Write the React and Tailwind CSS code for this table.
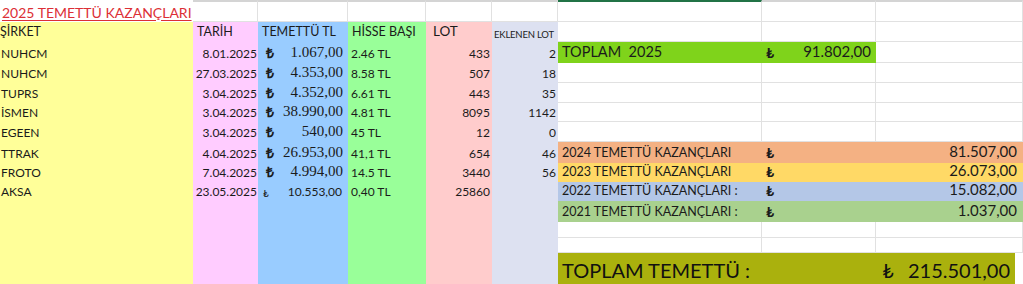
const sans = "font-['Lato',sans-serif]";
const serif = "font-['Liberation_Serif',serif]";

const rows = [
  ["NUHCM", "8.01.2025", "1.067,00", "2.46 TL", "433", "2"],
  ["NUHCM", "27.03.2025", "4.353,00", "8.58 TL", "507", "18"],
  ["TUPRS", "3.04.2025", "4.352,00", "6.61 TL", "443", "35"],
  ["İSMEN", "3.04.2025", "38.990,00", "4.81 TL", "8095", "1142"],
  ["EGEEN", "3.04.2025", "540,00", "45 TL", "12", "0"],
  ["TTRAK", "4.04.2025", "26.953,00", "41,1 TL", "654", "46"],
  ["FROTO", "7.04.2025", "4.994,00", "14.5 TL", "3440", "56"],
  ["AKSA", "23.05.2025", "10.553,00", "0,40 TL", "25860", ""],
];

// sag taraftaki renkli satirlar (satir indeksi -> bar)
const bars = {
  7: { label: "2024 TEMETTÜ KAZANÇLARI", value: "81.507,00", bg: "bg-[#f4b183]" },
  8: { label: "2023 TEMETTÜ KAZANÇLARI", value: "26.073,00", bg: "bg-[#ffd966]" },
  9: { label: "2022 TEMETTÜ KAZANÇLARI :", value: "15.082,00", bg: "bg-[#b4c7e7]" },
  10: { label: "2021 TEMETTÜ KAZANÇLARI :", value: "1.037,00", bg: "bg-[#a9d18e]" },
};

const grid = "border-r border-b border-[#e1e1e1] bg-white";

function Empty({ top, green }) {
  return (
    <div
      className={`${grid} ${top ? "border-t-2" : ""} ${
        top ? (green ? "border-t-[#217346]" : "border-t-[#d4d4d4]") : ""
      }`}
    />
  );
}

function LeftRow({ r }) {
  const cell = "flex items-end pb-[2px] leading-tight text-[12px] text-[#1b1b1b] whitespace-nowrap";
  return (
    <>
      <div className={`${cell} bg-[#ffff99] pl-[1px]`}>{r[0]}</div>
      <div className={`${cell} bg-[#ffccff] justify-end pr-[1px]`}>{r[1]}</div>
      {r[0] === "AKSA" ? (
        <div className={`${cell} bg-[#99ccff] pl-[5px] pr-[6px] justify-between`}>
          <span className="text-[10px]">₺</span>
          <span>{r[2]}</span>
        </div>
      ) : (
        <div className={`flex items-end pb-[1px] leading-tight bg-[#99ccff] pl-[8px] pr-[5px] justify-between text-[#1b1b1b] ${serif}`}>
          <span className="text-[14px] font-bold">₺</span>
          <span className="text-[15px]">{r[2]}</span>
        </div>
      )}
      <div className={`${cell} bg-[#99ff99] pl-[3px]`}>{r[3]}</div>
      <div className={`${cell} bg-[#ffcccc] justify-end pr-[2px]`}>{r[4]}</div>
      <div className={`${cell} bg-[#dde1f1] justify-end pr-[2px]`}>{r[5]}</div>
    </>
  );
}

function EmptyLeft() {
  return (
    <>
      <div className="bg-[#ffff99]" />
      <div className="bg-[#ffccff]" />
      <div className="bg-[#99ccff]" />
      <div className="bg-[#99ff99]" />
      <div className="bg-[#ffcccc]" />
      <div className="bg-[#dde1f1]" />
    </>
  );
}

function Bar({ label, value, bg }) {
  return (
    <div className={`col-span-3 flex items-end pb-[2px] leading-tight text-[12.5px] text-[#1b1b1b] whitespace-nowrap ${bg}`}>
      <span className="w-[208px] pl-[4px]">{label}</span>
      <span className="text-[14px] font-bold">₺</span>
      <span className="flex-1 text-right pr-[6px] text-[15px]">{value}</span>
    </div>
  );
}

export default function App() {
  const right = [];
  for (let i = 0; i < 14; i++) {
    if (i === 0) {
      right.push(
        <div key={i} className="contents">
          <Empty top green />
          <Empty top />
          <Empty top />
        </div>
      );
    } else if (i === 2) {
      right.push(
        <div key={i} className="contents">
          <div className="col-span-2 flex items-end pb-[2px] leading-tight text-[#1b1b1b] bg-[#7fd31b] whitespace-nowrap">
            <span className="w-[208px] pl-[4px] text-[14.5px] whitespace-pre">TOPLAM  2025</span>
            <span className="text-[14px] font-bold">₺</span>
            <span className="flex-1 text-right pr-[5px] text-[15px]">91.802,00</span>
          </div>
          <Empty />
        </div>
      );
    } else if (bars[i]) {
      right.push(<Bar key={i} {...bars[i]} />);
    } else if (i === 13) {
      right.push(
        <div key={i} className="col-span-3 flex items-end pb-[1px] leading-tight text-[20px] text-[#111] bg-[#aab10d] mr-[8px] whitespace-nowrap">
          <span className="flex-1 pl-[4px]">TOPLAM TEMETTÜ :</span>
          <span className="pr-[5px] flex gap-[14px]">
            <span>₺</span>
            <span>215.501,00</span>
          </span>
        </div>
      );
    } else {
      right.push(
        <div key={i} className="contents">
          <Empty />
          <Empty />
          <Empty />
        </div>
      );
    }
  }

  const head = "flex items-end pb-[2px] leading-tight text-[12.5px] text-[#1b1b1b] whitespace-nowrap";

  return (
    <div className={`w-[1023px] h-[284px] overflow-hidden bg-white ${sans}`}>
      <div className="grid grid-cols-[193px_65px_90px_78px_66px_66px_204px_114px_1fr] grid-rows-[22px_20px_21px_20px_20px_19px_20px_21px_19px_19px_21px_16px_15px_31px]">
        {/* satir 1: baslik */}
        <div className="flex items-end pb-[1px] pl-[2px] leading-tight bg-white whitespace-nowrap">
          <span className="text-[14px] text-[#dc2f36] underline underline-offset-2">2025 TEMETTÜ KAZANÇLARI</span>
        </div>
        <Empty top />
        <Empty top />
        <Empty top />
        <Empty top />
        <Empty top />
        {right[0]}

        {/* satir 2: basliklar */}
        <div className={`${head} bg-[#ffff99]`}>ŞİRKET</div>
        <div className={`${head} bg-[#ffccff] pl-[4px]`}>TARİH</div>
        <div className={`${head} bg-[#99ccff] pl-[4px]`}>TEMETTÜ TL</div>
        <div className={`${head} bg-[#99ff99] pl-[4px]`}>HİSSE BAŞI</div>
        <div className={`${head} bg-[#ffcccc] pl-[7px] text-[13.5px]`}>LOT</div>
        <div className="flex items-end pb-[1px] pl-[2px] leading-tight text-[9.5px] tracking-[-0.2px] text-[#1b1b1b] bg-[#dde1f1] whitespace-nowrap">EKLENEN LOT</div>
        {right[1]}

        {rows.map((r, i) => (
          <div key={r[0] + i} className="contents">
            <LeftRow r={r} />
            {right[i + 2]}
          </div>
        ))}

        {[10, 11, 12, 13].map((i) => (
          <div key={i} className="contents">
            <EmptyLeft />
            {right[i]}
          </div>
        ))}
      </div>
    </div>
  );
}
